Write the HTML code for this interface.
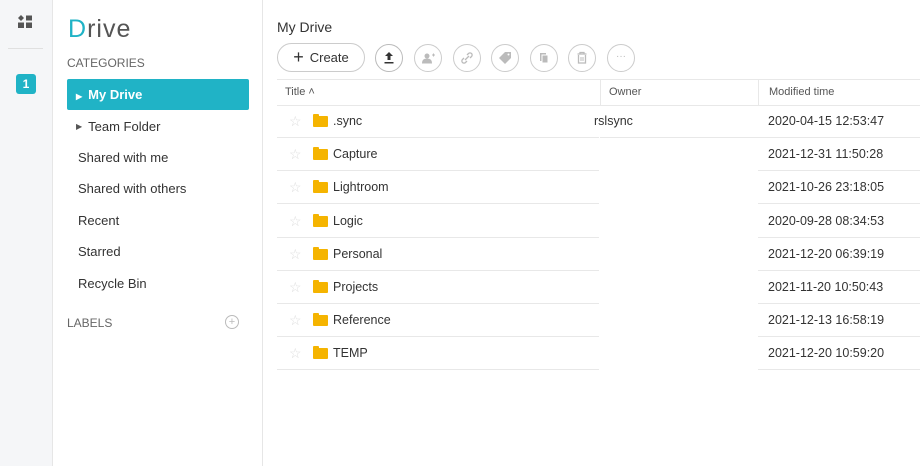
<!DOCTYPE html><html><head><style>
body{margin:0;width:920px;height:466px;font-family:"Liberation Sans",sans-serif;background:#fff;position:relative;overflow:hidden;color:#333}
.rail{position:absolute;left:0;top:0;width:52px;height:466px;background:#f5f6f8;border-right:1px solid #e6e6e6}
.side{position:absolute;left:53px;top:0;width:209px;height:466px;border-right:1px solid #e6e6e6}
.a{position:absolute}
.nav{position:absolute;left:25px;font-size:13px;color:#333}
.btn{position:absolute;top:44px;width:28px;height:28px;border:1px solid #ccc;border-radius:50%;box-sizing:border-box}
.row{position:absolute;height:33px;font-size:12.5px}
.c{position:absolute;height:32px;line-height:32px;border-bottom:1px solid #e8e8e8}
.fold{position:absolute;left:36px;top:11px;width:15px;height:11px;background:#f5b400;border-radius:1px}
.fold:before{content:"";position:absolute;left:0;top:-2px;width:6px;height:3px;background:#f5b400;border-radius:1px 1px 0 0}
.star{position:absolute;left:12px;top:0;color:#ddd;font-size:14px}
</style></head><body>
<div class="rail">
<svg class="a" style="left:17px;top:15px" width="16" height="14"><path d="M4 0L7 3 4 6 1 3Z" fill="#555"/><rect x="9" y="0.5" width="6" height="5" fill="#555"/><rect x="1" y="7.5" width="6" height="5.5" fill="#555"/><rect x="9" y="7.5" width="6" height="5.5" fill="#555"/></svg>
<div class="a" style="left:8px;top:48px;width:35px;border-top:1px solid #e0e0e0"></div>
<div class="a" style="left:16px;top:74px;width:20px;height:20px;background:#20b3c6;border-radius:3px;color:#fff;font-size:12px;font-weight:bold;text-align:center;line-height:20px">1</div>
</div>
<div class="side">
<div class="a" style="left:15px;top:15px;font-size:25px;color:#555;letter-spacing:1px"><span style="color:#20b3c6">D</span>rive</div>
<div class="a" style="left:14px;top:56px;font-size:12px;color:#666">CATEGORIES</div>
<div class="a" style="left:14px;top:79px;width:182px;height:31px;background:#20b3c6;border-radius:2px;color:#fff;font-size:13px;font-weight:bold;line-height:31px"><span style="font-size:8px;margin:0 6px 0 9px">▶</span>My Drive</div>
<div class="nav" style="left:23px;top:119px"><span style="font-size:8px;margin-right:6px;color:#555;vertical-align:2px">▶</span>Team Folder</div>
<div class="nav" style="top:150px">Shared with me</div>
<div class="nav" style="top:181px">Shared with others</div>
<div class="nav" style="top:213px">Recent</div>
<div class="nav" style="top:244px">Starred</div>
<div class="nav" style="top:276px">Recycle Bin</div>
<div class="a" style="left:14px;top:316px;font-size:12px;color:#666">LABELS</div>
<div class="a" style="left:172px;top:315px;width:12px;height:12px;border:1px solid #bbb;border-radius:50%;color:#bbb;font-size:11px;line-height:12px;text-align:center">+</div>
</div>
<div class="a" style="left:277px;top:19px;font-size:14px;color:#333">My Drive</div>
<div class="a" style="left:277px;top:43px;width:88px;height:29px;border:1px solid #ccc;border-radius:15px;box-sizing:border-box;font-size:13px;line-height:27px;text-align:center"><span style="font-size:18px;vertical-align:-1px;margin-right:6px">+</span>Create</div>
<div class="btn" style="left:375px;border-color:#bbb"><svg width="26" height="26"><path d="M13 7L9 11h2.5v4h3v-4H17Z M8.5 17h9v1.5h-9Z" fill="#333"/></svg></div>
<div class="btn" style="left:414px"><svg width="26" height="26"><circle cx="12" cy="11" r="2.5" fill="#bbb"/><path d="M7.5 18c0-3 2-4 4.5-4s4.5 1 4.5 4Z M17 10h3M18.5 8.5v3" fill="#bbb" stroke="#bbb"/></svg></div>
<div class="btn" style="left:453px"><svg width="26" height="26"><path d="M11 15l4-4M10 13l-1.5 1.5a2 2 0 003 3L13 16M16 13l1.5-1.5a2 2 0 00-3-3L13 10" stroke="#bbb" stroke-width="1.3" fill="none"/></svg></div>
<div class="btn" style="left:491px"><svg width="26" height="26"><path d="M13 7h6v6l-6 6-6-6Z" fill="#bbb"/><circle cx="16.5" cy="9.5" r="1" fill="#fff"/></svg></div>
<div class="btn" style="left:530px"><svg width="26" height="26"><rect x="9" y="8" width="6" height="8" fill="#bbb"/><rect x="11" y="10" width="6" height="8" fill="#bbb" stroke="#fff"/></svg></div>
<div class="btn" style="left:568px"><svg width="26" height="26"><path d="M8.5 9h9M11 9V7.5h4V9M9.5 10v8h7v-8" stroke="#bbb" stroke-width="1.3" fill="none"/><path d="M12 12v4M14 12v4" stroke="#bbb"/></svg></div>
<div class="btn" style="left:607px;color:#bbb;font-size:10px;text-align:center;line-height:24px">···</div>
<div class="a" style="left:277px;top:79px;width:643px;height:25px;border-top:1px solid #e8e8e8;border-bottom:1px solid #e8e8e8;font-size:11px;color:#555;line-height:25px">
<span class="a" style="left:8px">Title ˄</span><span class="a" style="left:323px;border-left:1px solid #e8e8e8;padding-left:8px;height:25px">Owner</span><span class="a" style="left:481px;border-left:1px solid #e8e8e8;padding-left:10px;height:25px">Modified time</span></div>
<div id="rows"></div>
<script>
var d=[[".sync","rslsync","2020-04-15 12:53:47"],["Capture","","2021-12-31 11:50:28"],["Lightroom","","2021-10-26 23:18:05"],["Logic","","2020-09-28 08:34:53"],["Personal","","2021-12-20 06:39:19"],["Projects","","2021-11-20 10:50:43"],["Reference","","2021-12-13 16:58:19"],["TEMP","","2021-12-20 10:59:20"]];
var h="";d.forEach(function(r,i){var t=105+i*33.2;
h+='<div class="row" style="top:'+t+'px;left:277px;width:643px"><div class="c" style="left:0;width:322px"><span class="star">☆</span><span class="fold"></span><span style="position:absolute;left:56px">'+r[0]+'</span></div>'+
'<div class="c" style="left:323px;width:158px;'+(r[1]?'':'border-bottom:none')+'"><span style="position:absolute;left:-6px">'+r[1]+'</span></div>'+
'<div class="c" style="left:481px;width:162px"><span style="position:absolute;left:10px">'+r[2]+'</span></div></div>';});
document.getElementById("rows").innerHTML=h;
</script>
</body></html>
